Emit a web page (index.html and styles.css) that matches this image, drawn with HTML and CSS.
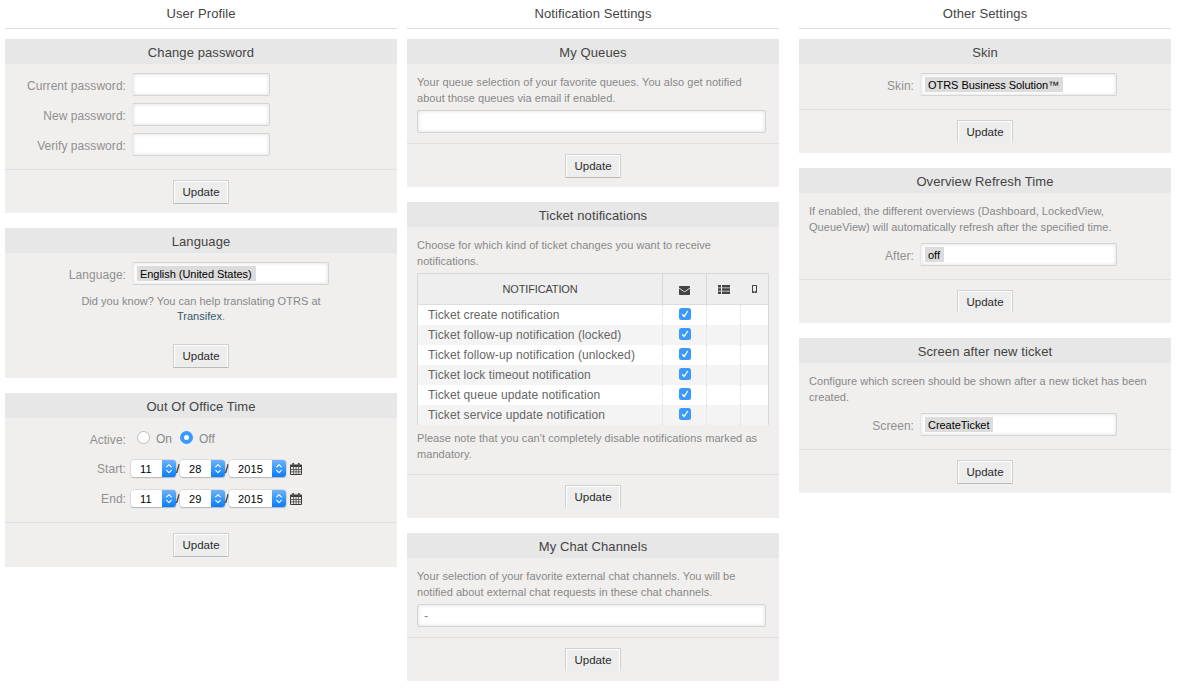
FILE: index.html
```html
<!DOCTYPE html>
<html lang="en">
<head>
<meta charset="utf-8">
<title>Preferences</title>
<link rel="stylesheet" href="styles.css">
</head>
<body>
<svg class="defs" aria-hidden="true">
  <symbol id="calendar" viewBox="0 0 12 12">
    <path fill="#3d3d3d" d="M1 1.500h1.300V.8a.9.900 0 0 1 1.800 0v.7h3.800V.8a.9.900 0 0 1 1.800 0v.7H11a1 1 0 0 1 1 1V11a1 1 0 0 1-1 1H1a1 1 0 0 1-1-1V2.500a1 1 0 0 1 1-1z"/>
    <path fill="#e8e7e6" d="M1 4.100h2v1.900H1zM3.700 4.100h2v1.900h-2zM6.400 4.100h2v1.900h-2zM9.100 4.100H11v1.900H9.100zM1 6.700h2v1.800H1zM3.700 6.700h2v1.800h-2zM6.400 6.700h2v1.800h-2zM9.100 6.700H11v1.800H9.100zM1 9.200h2v1.900H1zM3.700 9.200h2v1.900h-2zM6.400 9.200h2v1.900h-2zM9.100 9.200H11v1.900H9.100z"/>
    <path stroke="#999" stroke-width=".5" d="M3.200 1v1.800M8.800 1v1.800"/>
  </symbol>
  <symbol id="arrows" viewBox="0 0 14 17">
    <path fill="none" stroke="#fff" stroke-width="1.100" stroke-linecap="round" stroke-linejoin="round" d="M4.700 6.900 7 4.600l2.300 2.300M4.700 10.300 7 12.600l2.300-2.300"/>
  </symbol>
  <symbol id="tick" viewBox="0 0 12 12">
    <path fill="none" stroke="#fff" stroke-width="1.300" stroke-linecap="round" stroke-linejoin="round" d="M3.500 6.700 5.100 8.600 8.400 3.500"/>
  </symbol>
</svg>
<main class="preferences">
  <section class="column">
    <h1 class="column-title">User Profile</h1>
    <form class="widget">
      <h2 class="widget-title">Change password</h2>
      <div class="fields">
        <div class="row"><label class="label">Current password:</label><span class="input short"></span></div>
        <div class="row"><label class="label">New password:</label><span class="input short"></span></div>
        <div class="row"><label class="label">Verify password:</label><span class="input short"></span></div>
      </div>
      <div class="actions"><button class="button" type="button">Update</button></div>
    </form>
    <form class="widget">
      <h2 class="widget-title">Language</h2>
      <div class="fields">
        <div class="row"><label class="label">Language:</label><span class="input"><span class="chip">English (United States)</span></span></div>
      </div>
      <p class="hint">Did you know? You can help translating OTRS at<br><a class="link">Transifex</a>.</p>
      <div class="actions plain"><button class="button" type="button">Update</button></div>
    </form>
    <form class="widget">
      <h2 class="widget-title">Out Of Office Time</h2>
      <div class="dates">
        <div class="row active"><label class="label">Active:</label><span class="radio"></span><span class="choice">On</span><span class="radio on"></span><span class="choice">Off</span></div>
        <div class="row date"><label class="label">Start:</label><span class="select">11<svg class="stepper"><use href="#arrows"/></svg></span><i class="slash">/</i><span class="select">28<svg class="stepper"><use href="#arrows"/></svg></span><i class="slash">/</i><span class="select year">2015<svg class="stepper"><use href="#arrows"/></svg></span><svg class="calendar"><use href="#calendar"/></svg></div>
        <div class="row date"><label class="label">End:</label><span class="select">11<svg class="stepper"><use href="#arrows"/></svg></span><i class="slash">/</i><span class="select">29<svg class="stepper"><use href="#arrows"/></svg></span><i class="slash">/</i><span class="select year">2015<svg class="stepper"><use href="#arrows"/></svg></span><svg class="calendar"><use href="#calendar"/></svg></div>
      </div>
      <div class="actions tall"><button class="button" type="button">Update</button></div>
    </form>
  </section>

  <section class="column">
    <h1 class="column-title">Notification Settings</h1>
    <form class="widget">
      <h2 class="widget-title">My Queues</h2>
      <p class="text">Your queue selection of your favorite queues. You also get notified<br>about those queues via email if enabled.</p>
      <span class="input wide"></span>
      <div class="actions"><button class="button" type="button">Update</button></div>
    </form>
    <form class="widget">
      <h2 class="widget-title">Ticket notifications</h2>
      <p class="text">Choose for which kind of ticket changes you want to receive<br>notifications.</p>
      <div class="table">
        <div class="line head"><span class="name">NOTIFICATION</span>
          <span class="mail"><svg width="11" height="9" viewBox="0 0 11 9"><path fill="#444" d="M.8 0h9.400a.8.800 0 0 1 .8.800v7.400a.8.800 0 0 1-.8.800H.8a.8.800 0 0 1-.8-.8V.8A.8.800 0 0 1 .8 0z"/><path fill="none" stroke="#eee" stroke-width=".9" d="M0 2 4.400 5.200q1.100.8 2.200 0L11 2"/></svg></span>
          <span class="list"><svg width="12" height="9" viewBox="0 0 12 9"><path fill="#444" d="M0 0h3v2.400H0zM4 0h8v2.400H4zM0 3.300h3v2.400H0zM4 3.300h8v2.400H4zM0 6.600h3V9H0zM4 6.600h8V9H4z"/></svg></span>
          <span class="phone"><svg width="5" height="8" viewBox="0 0 5 8"><path fill="#444" fill-rule="evenodd" d="M.7 0h3.600a.7.700 0 0 1 .7.700v6.600a.7.700 0 0 1-.7.700H.7a.7.700 0 0 1-.7-.7V.7A.7.700 0 0 1 .7 0zM1 1v5.300h3V1zM2.100 6.800v.6h.8v-.6z"/></svg></span></div>
        <div class="line"><span class="name">Ticket create notification</span><span class="mail"><svg class="check"><use href="#tick"/></svg></span><span class="list"></span><span class="phone"></span></div>
        <div class="line"><span class="name">Ticket follow-up notification (locked)</span><span class="mail"><svg class="check"><use href="#tick"/></svg></span><span class="list"></span><span class="phone"></span></div>
        <div class="line"><span class="name">Ticket follow-up notification (unlocked)</span><span class="mail"><svg class="check"><use href="#tick"/></svg></span><span class="list"></span><span class="phone"></span></div>
        <div class="line"><span class="name">Ticket lock timeout notification</span><span class="mail"><svg class="check"><use href="#tick"/></svg></span><span class="list"></span><span class="phone"></span></div>
        <div class="line"><span class="name">Ticket queue update notification</span><span class="mail"><svg class="check"><use href="#tick"/></svg></span><span class="list"></span><span class="phone"></span></div>
        <div class="line"><span class="name">Ticket service update notification</span><span class="mail"><svg class="check"><use href="#tick"/></svg></span><span class="list"></span><span class="phone"></span></div>
      </div>
      <p class="text note">Please note that you can't completely disable notifications marked as<br>mandatory.</p>
      <div class="actions"><button class="button open" type="button">Update</button></div>
    </form>
    <form class="widget">
      <h2 class="widget-title">My Chat Channels</h2>
      <p class="text">Your selection of your favorite external chat channels. You will be<br>notified about external chat requests in these chat channels.</p>
      <span class="input wide">-</span>
      <div class="actions"><button class="button open" type="button">Update</button></div>
    </form>
  </section>

  <section class="column last">
    <h1 class="column-title">Other Settings</h1>
    <form class="widget">
      <h2 class="widget-title">Skin</h2>
      <div class="fields">
        <div class="row"><label class="label">Skin:</label><span class="input"><span class="chip">OTRS Business Solution™</span></span></div>
      </div>
      <div class="actions"><button class="button open" type="button">Update</button></div>
    </form>
    <form class="widget">
      <h2 class="widget-title">Overview Refresh Time</h2>
      <p class="text">If enabled, the different overviews (Dashboard, LockedView,<br>QueueView) will automatically refresh after the specified time.</p>
      <div class="fields after-text">
        <div class="row"><label class="label">After:</label><span class="input"><span class="chip">off</span></span></div>
      </div>
      <div class="actions"><button class="button open" type="button">Update</button></div>
    </form>
    <form class="widget">
      <h2 class="widget-title">Screen after new ticket</h2>
      <p class="text">Configure which screen should be shown after a new ticket has been<br>created.</p>
      <div class="fields after-text">
        <div class="row"><label class="label">Screen:</label><span class="input"><span class="chip">CreateTicket</span></span></div>
      </div>
      <div class="actions"><button class="button" type="button">Update</button></div>
    </form>
  </section>
</main>
</body>
</html>
```
FILE: styles.css
```css
* { box-sizing: border-box; }
body {
  margin: 0;
  background: #fff;
  color: #888;
  font-family: "Liberation Sans", Arial, sans-serif;
  font-size: 12px;
}
.defs { display: none; }
.preferences {
  display: grid;
  grid-template-columns: 392px 372px 372px;
  align-items: start;
  padding-left: 5px;
  column-gap: 10px;
}
.last { margin-left: 10px; width: 372px; }
.column-title, .widget-title {
  margin: 0;
  color: #444;
  font-size: 13px;
  font-weight: normal;
  letter-spacing: .1px;
  text-align: center;
}
.column-title {
  height: 29px;
  margin-bottom: 10px;
  border-bottom: 1px solid #ddd;
  line-height: 27px;
}
.widget { margin: 0 0 15px; background: #f0efee; }
.widget-title { height: 25px; background: #e7e7e7; line-height: 27px; }

.fields { padding: 9px 0 13px; display: grid; gap: 7px; }
.after-text { padding-top: 8px; }
.row { display: flex; height: 23px; }
.label {
  width: 121px;
  margin-right: 6px;
  line-height: 26px;
  text-align: right;
  letter-spacing: .05px;
  color: #909090;
}
.last .label { width: 115px; }
.input {
  display: block;
  width: 197px;
  height: 23px;
  padding: 4px;
  border: 1px solid #d4d4d4;
  border-left-color: #e6e6e6;
  border-radius: 2px;
  background: #fff;
  box-shadow: inset 0 0 4px #ddd;
}
.short { width: 138px; }
.wide {
  width: 349px;
  margin: 4px 0 10px 10px;
  border-left-color: #d4d4d4;
  padding: 0 6px;
  font-size: 13px;
  line-height: 21px;
}
.chip {
  display: inline-block;
  height: 15px;
  margin-top: -1px;
  padding: 0 4px 0 3px;
  background: #dcdcdc;
  color: #000;
  font-size: 11px;
  letter-spacing: -.04px;
  line-height: 16px;
  vertical-align: top;
}
.text { margin: 0; padding: 10px 0 0 10px; font-size: 11px; letter-spacing: .04px; line-height: 16px; white-space: nowrap; }
.note { padding: 5px 0 12px 10px; letter-spacing: .07px; }
.hint { margin: -4px 0 0; font-size: 11px; letter-spacing: .03px; line-height: 15px; text-align: center; }
.link { color: #35586a; }
.actions {
  display: flex;
  justify-content: center;
  height: 44px;
  padding-top: 10px;
  border-top: 1px solid #dfdfdf;
}
.plain { height: 54px; padding-top: 19px; border-top-color: transparent; }
.tall { height: 45px; }
.button {
  width: 56px;
  height: 24px;
  padding: 0 0 1px;
  border: 1px solid #d0d0d0;
  border-bottom-color: #bbb;
  border-radius: 1px;
  background: #ededed;
  box-shadow: inset 1px 1px 0 #fff, inset -1px 0 0 #fff;
  color: #2b2b2b;
  font: 11.500px "Liberation Sans", Arial, sans-serif;
  text-align: center;
}
.open { height: 23px; border-bottom: 0; }

.dates { height: 104px; padding-top: 9px; }
.active { height: 33px; align-items: flex-start; }
.radio {
  width: 13px;
  height: 13px;
  margin: 4px 6px 0 5px;
  border: 1px solid #bbb;
  border-radius: 50%;
  background: #fff;
}
.on { margin-left: 8px; border: 4px solid #3b99fc; }
.choice { line-height: 24px; }
.date { height: 29.500px; color: #000; font-size: 11px; }
.date .label { margin-right: 5px; line-height: 19px; font-size: 12px; }
.select {
  display: flex;
  justify-content: space-between;
  width: 45px;
  height: 17px;
  padding-left: 9px;
  border-radius: 3px;
  background: #fff;
  box-shadow: 0 0 0 .5px #c8c8c8, 0 1px 1px #aaa;
  letter-spacing: .15px;
  line-height: 18px;
}
.year { width: 57px; }
.stepper { width: 14px; height: 17px; border-radius: 0 3px 3px 0; background: linear-gradient(#6cb3fa, #087dff); }
.slash { width: 4px; font-size: 13px; font-style: normal; line-height: 18px; }
.calendar { width: 12px; height: 12px; margin: 3px 0 0 4px; }

.table {
  width: 352px;
  margin: 4px 0 0 10px;
  border: 1px solid #d8d8d8;
  border-bottom: 0;
}
.line { display: grid; grid-template-columns: 245px 44px 34px 27px; height: 20px; background: #fff; color: #666; line-height: 20px; }
.line:nth-child(odd) { background: #f4f4f4; }
.line .name { padding-left: 10px; letter-spacing: .1px; white-space: nowrap; }
.mail, .list, .phone { display: flex; align-items: center; justify-content: center; }
.name, .mail, .list { border-right: 1px dotted #ddd; }
.line.head { height: 31px; border-bottom: 1px solid #ddd; background: #eee; color: #444; line-height: 30px; }
.head .name { padding: 0; font-size: 11px; letter-spacing: -.15px; text-align: center; }
.head .name, .head .mail { border-right: 1px solid #d8d8d8; }
.head .list { border: 0; }
.head .mail { padding-top: 3px; }
.check { width: 12px; height: 12px; margin-top: -2px; border-radius: 2.500px; background: #3b99fc; }
```
